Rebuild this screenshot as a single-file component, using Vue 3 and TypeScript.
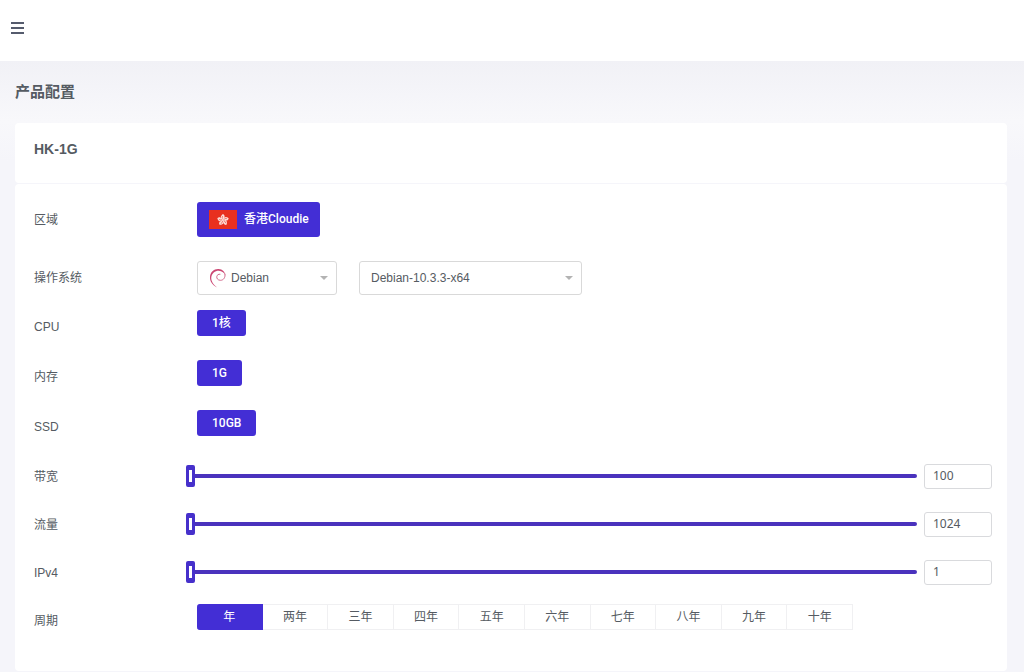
<script setup lang="ts">
import { ref } from 'vue'

interface Spec {
  label: string
  value: string
}

interface Range {
  id: string
  label: string
  value: number
  min: number
  max: number
}

const specs: Spec[] = [
  { label: 'CPU', value: '1核' },
  { label: '内存', value: '1G' },
  { label: 'SSD', value: '10GB' },
]

const ranges = ref<Range[]>([
  { id: 'bandwidth', label: '带宽', value: 100, min: 100, max: 1000 },
  { id: 'traffic', label: '流量', value: 1024, min: 1024, max: 10240 },
  { id: 'ipv4', label: 'IPv4', value: 1, min: 1, max: 10 },
])

const periods = ['年', '两年', '三年', '四年', '五年', '六年', '七年', '八年', '九年', '十年']
const period = ref('年')
const system = ref('Debian')
const version = ref('Debian-10.3.3-x64')
</script>

<template>
  <div class="page">
    <header class="topbar">
      <button class="menu" type="button" aria-label="菜单">
        <svg width="13" height="12" viewBox="0 0 13 12" aria-hidden="true">
          <path d="M0 1h13M0 6h13M0 11h13" stroke="#555b6d" stroke-width="2" />
        </svg>
      </button>
    </header>

    <main class="content">
      <h1 class="title">产品配置</h1>

      <section class="card card-head">
        <h2 class="product">HK-1G</h2>
      </section>

      <section class="card card-body">
        <div class="row row-region">
          <span class="label">区域</span>
          <button class="choice region" type="button" aria-pressed="true">
            <svg class="flag" width="28" height="19" viewBox="0 0 28 19" aria-hidden="true">
              <rect width="28" height="19" fill="#e8301f" />
              <g transform="translate(14 10)">
                <g v-for="n in 5" :key="n" :transform="`rotate(${(n - 1) * 72})`">
                  <path d="M0 0C-3-1-3-4 0-6C2-5 2-3 1-2.500C2-1.500 1-.5 0 0Z" fill="#fbdcd8" />
                  <path d="M0-1C-1-2-1-3-.2-4" fill="none" stroke="#e8301f" stroke-width=".6" />
                </g>
              </g>
            </svg>
            <span>香港Cloudie</span>
          </button>
        </div>

        <div class="row">
          <label class="label" for="system">操作系统</label>
          <div class="selects">
            <div class="select-box system">
              <svg class="debian" width="18" height="20" viewBox="0 0 18 20" aria-hidden="true">
                <path d="M8 19.500C3.500 17 .8 13.500 1 9C1.200 4 5 .8 9.500 1C13.500 1.200 16.300 4 16.200 7.200C15.500 5 13 2.800 9.800 2.800C5.800 2.800 3 5.500 2.300 9C1.800 13 4.500 16.500 8 19.500Z" fill="#cb4672" />
                <path d="M16 6C16.500 9.500 14.500 12.300 11.500 12.300C8.700 12.300 7.500 10.300 7.800 8.500C8.100 6.800 9.500 6 11 6.200" fill="none" stroke="#d2688b" stroke-width="1" stroke-linecap="round" />
              </svg>
              <select id="system" v-model="system">
                <option>Debian</option>
              </select>
              <svg class="caret" width="8" height="4" viewBox="0 0 8 4" aria-hidden="true"><path d="M0 0h8L4 4z" fill="#b3b3b3" /></svg>
            </div>
            <div class="select-box version">
              <select v-model="version" aria-label="系统版本">
                <option>Debian-10.3.3-x64</option>
              </select>
              <svg class="caret" width="8" height="4" viewBox="0 0 8 4" aria-hidden="true"><path d="M0 0h8L4 4z" fill="#b3b3b3" /></svg>
            </div>
          </div>
        </div>

        <div v-for="spec in specs" :key="spec.label" class="row row-spec">
          <span class="label">{{ spec.label }}</span>
          <button class="choice small" type="button" aria-pressed="true">{{ spec.value }}</button>
        </div>

        <div v-for="range in ranges" :key="range.id" class="row row-range">
          <label class="label" :for="range.id">{{ range.label }}</label>
          <input :id="range.id" v-model.number="range.value" class="slider" type="range" :min="range.min" :max="range.max">
          <input v-model.number="range.value" class="amount" type="text" :aria-label="range.label">
        </div>

        <div class="row row-period">
          <span class="label">周期</span>
          <div class="periods" role="group" aria-label="周期">
            <button
              v-for="item in periods"
              :key="item"
              class="period"
              :class="{ active: item === period }"
              type="button"
              :aria-pressed="item === period"
              @click="period = item"
            >{{ item }}</button>
          </div>
        </div>
      </section>
    </main>
  </div>
</template>

<style>
body {
  margin: 0;
  background: #f5f5fa;
}
</style>

<style scoped>
.page {
  color: #555b62;
  font: 12px/18px "Liberation Sans", "Noto Sans CJK SC", sans-serif;
}

.page * {
  box-sizing: border-box;
}

button,
input,
select {
  margin: 0;
  color: inherit;
  font: inherit;
}

.topbar {
  display: flex;
  align-items: center;
  height: 61px;
  padding: 0 11px 5px;
  background: #fff;
}

.menu {
  display: flex;
  padding: 0;
  border: 0;
  background: none;
}

.content {
  padding: 19px 17px 1px 15px;
  background: linear-gradient(#f1f1f6, #f8f8fb 60px, #f5f5fa 100px);
}

.title {
  margin: 0 0 19px;
  font-size: 15px;
  line-height: 24px;
  font-weight: 700;
}

.card {
  border-radius: 4px;
  background: #fff;
}

.card-head {
  margin-bottom: 1px;
  padding: 16px 19px 24px;
}

.product {
  margin: 0;
  font-size: 14px;
  line-height: 20px;
}

.card-body {
  padding: 0 15px 27px 19px;
}

.row {
  display: flex;
  align-items: center;
  min-height: 48px;
}

.row-region {
  min-height: 70px;
}

.row-spec {
  min-height: 50px;
}

.label {
  flex: 0 0 163px;
}

.row-range .label {
  flex-basis: 152px;
}

.row-region .label,
.row-range .label,
.row-period .label {
  padding-top: 2px;
}

.choice {
  border: 0;
  border-radius: 3px;
  background: #432ed5;
  color: #fff;
  font-family: Roboto, "Noto Sans CJK SC", sans-serif;
  font-weight: 500;
}

.region {
  display: flex;
  align-items: center;
  gap: 7px;
  height: 35px;
  padding: 0 11px 0 12px;
}

.small {
  height: 26px;
  margin-bottom: 8px;
  padding: 0 15px;
}

.selects {
  display: flex;
  gap: 22px;
}

.select-box {
  position: relative;
}

.select-box select {
  display: block;
  width: 100%;
  height: 34px;
  padding: 0 24px 0 11px;
  border: 1px solid #d9d9d9;
  border-radius: 3px;
  appearance: none;
  background: #fff;
}

.system {
  width: 140px;
}

.system select {
  padding-left: 33px;
}

.version {
  width: 223px;
}

.debian {
  position: absolute;
  top: 7px;
  left: 12px;
}

.caret {
  position: absolute;
  top: 15px;
  right: 9px;
}

.slider {
  flex: 1;
  min-width: 0;
  height: 22px;
  appearance: none;
  background: none;
}

.slider::-webkit-slider-runnable-track {
  height: 4px;
  border-radius: 2px;
  background: #4a32bd;
}

.slider::-webkit-slider-thumb {
  width: 9px;
  height: 22px;
  margin-top: -9px;
  border: solid #4630cb;
  border-width: 5px 3px;
  border-radius: 2px;
  appearance: none;
  background: #fff;
}

.amount {
  width: 68px;
  height: 25px;
  margin-left: 7px;
  padding: 0 8px 2px;
  border: 1px solid #d9dadd;
  border-radius: 3px;
  background: #fff;
  font-family: "Noto Sans", sans-serif;
}

.periods {
  display: flex;
  flex: 0 1 656px;
  margin-bottom: 7px;
}

.period {
  flex: 1;
  height: 26px;
  padding: 0;
  border: 1px solid #f0f0f2;
  border-left-width: 0;
  background: #fff;
}

.period.active {
  border-color: #432ed5;
  background: #432ed5;
  color: #fff;
}

.period:first-child {
  border-radius: 3px 0 0 3px;
}
</style>
